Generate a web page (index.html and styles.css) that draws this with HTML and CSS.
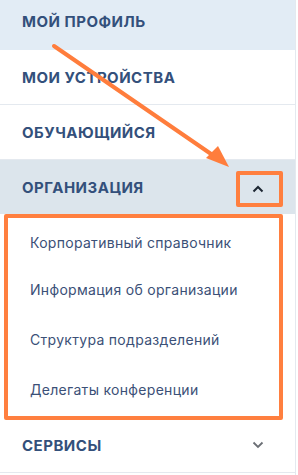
FILE: index.html
```html
<!DOCTYPE html>
<html lang="ru">
<head>
    <meta charset="UTF-8">
    <meta name="viewport" content="width=device-width, initial-scale=1.0">
    <title>Меню</title>
    <link rel="stylesheet" href="styles.css">
</head>
<body>
    <nav class="sidebar">
        <a class="menu-item menu-item-first active" href="#">МОЙ ПРОФИЛЬ</a>
        <a class="menu-item" href="#">МОИ УСТРОЙСТВА</a>
        <a class="menu-item" href="#">ОБУЧАЮЩИЙСЯ</a>
        <div class="menu-item open">
            <span>ОРГАНИЗАЦИЯ</span>
            <svg class="chevron chevron-up" width="12" height="8" viewBox="0 0 12 8">
                <path d="M1.5 6.5 L6 2 L10.5 6.5" fill="none" stroke="#1d2733" stroke-width="2"/>
            </svg>
            <span class="mark-box"></span>
        </div>
        <div class="submenu">
            <a class="submenu-item" href="#">Корпоративный справочник</a>
            <a class="submenu-item" href="#">Информация об организации</a>
            <a class="submenu-item" href="#">Структура подразделений</a>
            <a class="submenu-item" href="#">Делегаты конференции</a>
        </div>
        <div class="menu-item menu-item-last">
            <span>СЕРВИСЫ</span>
            <svg class="chevron" width="12" height="8" viewBox="0 0 12 8">
                <path d="M1.5 1.5 L6 6 L10.5 1.5" fill="none" stroke="#6b6f75" stroke-width="1.8"/>
            </svg>
        </div>

        <!-- annotation arrow -->
        <svg class="arrow" width="298" height="475" viewBox="0 0 298 475">
            <line x1="54" y1="46" x2="214" y2="156" stroke="#ff7d3c" stroke-width="4" stroke-linecap="round"/>
            <polygon points="229,167 206,158 218,146" fill="#ff7d3c"/>
        </svg>
    </nav>
</body>
</html>
```

FILE: styles.css
```css
body {
    margin: 0;
    background-color: #ffffff;
    font-family: 'Inter', 'Roboto', sans-serif;
}
.sidebar {
    position: relative;
    width: 295px;
    height: 475px;
    border-right: 1px solid #e4e9ef;
    overflow: hidden;
}
.menu-item {
    position: relative;
    display: flex;
    align-items: center;
    justify-content: space-between;
    box-sizing: border-box;
    height: 55px;
    padding: 0 30px 0 22px;
    border-bottom: 1px solid #e4e9ef;
    color: #33507b;
    font-size: 15px;
    font-weight: 700;
    letter-spacing: 0.5px;
    text-decoration: none;
}
.menu-item-first {
    height: 50px;
    padding-bottom: 8px;
}
.menu-item-last {
    height: 53px;
    padding-bottom: 2px;
}
.active {
    background-color: #e2ecf5;
    border-bottom: none;
}
.open {
    background-color: #dce5ec;
    border-bottom: none;
    height: 54px;
}
.chevron {
    display: block;
    margin-right: 1px;
}
.chevron-up {
    margin-top: 4px;
}
.mark-box {
    position: absolute;
    left: 236px;
    top: 11px;
    width: 47px;
    height: 36px;
    box-sizing: border-box;
    border: 4px solid #ff7f3f;
    border-radius: 2px;
}
.submenu {
    margin: 0 12px 0 4px;
    padding-bottom: 2px;
    border: 4px solid #ff7f3f;
    border-radius: 2px;
}
.submenu-item {
    display: flex;
    align-items: center;
    height: 49px;
    padding-left: 22px;
    color: #3b5077;
    font-size: 14px;
    letter-spacing: 0.3px;
    text-decoration: none;
}
.submenu-item:first-child {
    height: 44px;
    margin-top: 2px;
}
.submenu-item + .submenu-item {
    height: 50px;
}
.arrow {
    position: absolute;
    left: 0;
    top: 0;
    pointer-events: none;
}
```
